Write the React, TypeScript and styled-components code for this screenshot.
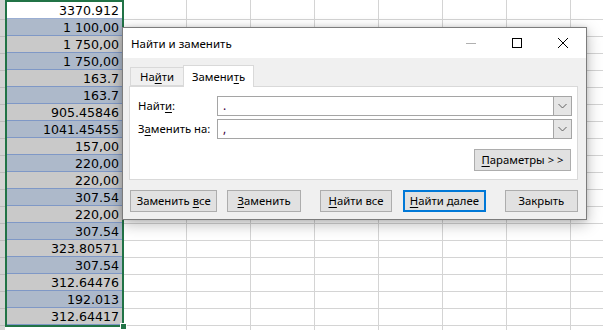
import React from "react"
import styled, { createGlobalStyle } from "styled-components"

const GlobalStyle = createGlobalStyle`
  html, body {
    margin: 0;
    padding: 0;
    width: 603px;
    height: 330px;
    overflow: hidden;
    background: #ffffff;
  }
`

const VALUES = [
  "3370.912",
  "1 100,00",
  "1 750,00",
  "1 750,00",
  "163.7",
  "163.7",
  "905.45846",
  "1041.45455",
  "157,00",
  "220,00",
  "220,00",
  "307.54",
  "220,00",
  "307.54",
  "323.80571",
  "307.54",
  "312.64476",
  "192.013",
  "312.64417",
]

const PLAIN_COLUMNS = [63, 64, 64, 64, 64, 64, 64, 64]
const ROW_COUNT = 20

const Screen = styled.div`
  position: relative;
  width: 603px;
  height: 330px;
  overflow: hidden;
  background: #ffffff;
`

const Sheet = styled.div`
  display: flex;
  align-items: flex-start;
  height: 330px;
`

const Column = styled.div<{ $w: number }>`
  display: flex;
  flex-direction: column;
  flex: 0 0 ${(p) => p.$w}px;
  width: ${(p) => p.$w}px;
`

const PlainCell = styled.div<{ $first?: boolean }>`
  height: ${(p) => (p.$first ? 19 : 16)}px;
  border-right: 1px solid #d4d4d4;
  border-bottom: 1px solid #d4d4d4;
`

const StubCell = styled.div<{ $first?: boolean }>`
  height: ${(p) => (p.$first ? 19 : 16)}px;
  background: #d4d4d4;
  border-bottom: 1px solid #bcbcbc;
`

const SelectedColumn = styled.div`
  position: relative;
  display: flex;
  flex-direction: column;
  flex: 0 0 119px;
  width: 119px;
  box-sizing: border-box;
  border: 2px solid #217346;
`

type Shade = "white" | "blue" | "grey"

const SHADES: Record<Shade, string> = {
  white: "#ffffff",
  blue: "#adb9ca",
  grey: "#c9c9c9",
}

const NumberCell = styled.div<{ $shade: Shade }>`
  height: 16px;
  line-height: 17px;
  padding-right: 3px;
  text-align: right;
  background: ${(p) => SHADES[p.$shade]};
  border-bottom: 1px solid ${(p) => (p.$shade === "white" ? "#9aaed3" : "#7f98c6")};
  font-family: "DejaVu Sans", sans-serif;
  font-size: 12.6px;
  color: #000000;
  white-space: nowrap;

  &:last-child {
    border-bottom: none;
  }
`

const FillHandle = styled.div`
  position: absolute;
  right: -5px;
  bottom: -5px;
  width: 5px;
  height: 5px;
  background: #217346;
  border: 1px solid #ffffff;
`

/* dialog */

const Window = styled.div`
  position: absolute;
  left: 122px;
  top: 27px;
  width: 465px;
  height: 193px;
  box-sizing: border-box;
  border: 1px solid #7c7c7c;
  background: #f0f0f0;
  box-shadow: 0 4px 14px rgba(0, 0, 0, 0.28), 0 0 4px rgba(0, 0, 0, 0.12);
  display: flex;
  flex-direction: column;
  font-family: "Noto Sans", "Liberation Sans", sans-serif;
  font-size: 11.3px;
  color: #000000;
`

const TitleBar = styled.div`
  display: flex;
  align-items: center;
  height: 30px;
  background: #ffffff;
  flex: 0 0 30px;
`

const Title = styled.div`
  flex: 1;
  padding-left: 8px;
  font-size: 11.5px;
  line-height: 16px;
  padding-top: 1px;
`

const WinButton = styled.div`
  width: 46px;
  height: 30px;
  display: flex;
  align-items: center;
  justify-content: center;
`

const Body = styled.div`
  flex: 1;
  display: flex;
  flex-direction: column;
  padding: 7px 8px 0 6px;
`

const TabStrip = styled.div`
  display: flex;
  align-items: flex-end;
  height: 21px;
  padding-left: 1px;
  position: relative;
  z-index: 1;
`

const Tab = styled.div<{ $active?: boolean }>`
  box-sizing: border-box;
  height: ${(p) => (p.$active ? 22 : 19)}px;
  margin-bottom: ${(p) => (p.$active ? -1 : 0)}px;
  padding: 0 ${(p) => (p.$active ? 8 : 9)}px;
  display: flex;
  align-items: center;
  background: ${(p) => (p.$active ? "#ffffff" : "#f0f0f0")};
  border: 1px solid #d9d9d9;
  border-bottom: ${(p) => (p.$active ? "none" : "1px solid #d9d9d9")};
  border-right: ${(p) => (p.$active ? "1px solid #d9d9d9" : "none")};
  line-height: 16px;
`

const Panel = styled.div`
  height: 94px;
  box-sizing: border-box;
  background: #ffffff;
  border: 1px solid #d9d9d9;
  display: grid;
  grid-template-columns: 79px 1fr;
  grid-auto-rows: min-content;
  row-gap: 3px;
  padding: 9px 5px 0 8px;
`

const Label = styled.div`
  display: flex;
  align-items: center;
  height: 20px;
  line-height: 16px;
  white-space: pre;
`

const Combo = styled.div`
  display: flex;
  height: 20px;
  box-sizing: border-box;
  border: 1px solid #a5a5a5;
  background: #ffffff;
`

const ComboText = styled.div`
  flex: 1;
  padding-left: 5px;
  line-height: 17px;
  font-size: 12px;
  color: #400040;
`

const ComboArrow = styled.div`
  width: 17px;
  display: flex;
  align-items: center;
  justify-content: center;
  background: #e5e5e5;
  border-left: 1px solid #a5a5a5;
`

const ParamsRow = styled.div`
  grid-column: 1 / 3;
  display: flex;
  justify-content: flex-end;
  padding-top: 7px;
  padding-right: 1px;
`

const Button = styled.div<{ $w: number; $ml?: number; $default?: boolean }>`
  box-sizing: border-box;
  width: ${(p) => p.$w}px;
  height: 22px;
  margin-left: ${(p) => p.$ml ?? 0}px;
  display: flex;
  align-items: center;
  justify-content: center;
  background: #e1e1e1;
  border: ${(p) => (p.$default ? "2px solid #0078d7" : "1px solid #adadad")};
  line-height: 16px;
  white-space: pre;
`

const ButtonText = styled.span`
  white-space: pre;
`

const ButtonRow = styled.div`
  display: flex;
  margin-top: 10px;
  padding-left: 1px;
`

const U = styled.span`
  text-decoration: underline;
  text-underline-offset: 2px;
`

function Chevron() {
  return (
    <svg width="9" height="6" viewBox="0 0 9 6">
      <polyline points="0.5,1 4.5,5 8.5,1" fill="none" stroke="#606060" strokeWidth="1" />
    </svg>
  )
}

function Spreadsheet() {
  const plainCells = Array.from({ length: ROW_COUNT }, (_, i) => i)
  return (
    <Sheet>
      <Column $w={5}>
        {plainCells.map((i) => (
          <StubCell key={i} $first={i === 0} />
        ))}
      </Column>
      <SelectedColumn>
        {VALUES.map((v, i) => (
          <NumberCell key={i} $shade={i === 0 ? "white" : i % 2 === 1 ? "blue" : "grey"}>
            {v}
          </NumberCell>
        ))}
        <FillHandle />
      </SelectedColumn>
      {PLAIN_COLUMNS.map((w, c) => (
        <Column key={c} $w={w}>
          {plainCells.map((i) => (
            <PlainCell key={i} $first={i === 0} />
          ))}
        </Column>
      ))}
    </Sheet>
  )
}

function FindReplaceDialog() {
  return (
    <Window>
      <TitleBar>
        <Title>Найти и заменить</Title>
        <WinButton>
          <svg width="10" height="10" viewBox="0 0 10 10">
            <line x1="0" y1="5.5" x2="10" y2="5.5" stroke="#b0b0b0" strokeWidth="1" />
          </svg>
        </WinButton>
        <WinButton>
          <svg width="10" height="10" viewBox="0 0 10 10">
            <rect x="0.5" y="0.5" width="9" height="9" fill="none" stroke="#000" strokeWidth="1" />
          </svg>
        </WinButton>
        <WinButton>
          <svg width="10" height="10" viewBox="0 0 10 10">
            <path d="M0 0 L10 10 M10 0 L0 10" stroke="#000" strokeWidth="1" />
          </svg>
        </WinButton>
      </TitleBar>
      <Body>
        <TabStrip>
          <Tab>
            <ButtonText>
              На<U>й</U>ти
            </ButtonText>
          </Tab>
          <Tab $active>
            <ButtonText>
              Замени<U>т</U>ь
            </ButtonText>
          </Tab>
        </TabStrip>
        <Panel>
          <Label>
            <ButtonText>
              Найт<U>и</U>:
            </ButtonText>
          </Label>
          <Combo>
            <ComboText>.</ComboText>
            <ComboArrow>
              <Chevron />
            </ComboArrow>
          </Combo>
          <Label>
            <ButtonText>
              З<U>а</U>менить на:
            </ButtonText>
          </Label>
          <Combo>
            <ComboText>,</ComboText>
            <ComboArrow>
              <Chevron />
            </ComboArrow>
          </Combo>
          <ParamsRow>
            <Button $w={97}>
              <ButtonText>
                <U>П</U>араметры &gt; &gt;
              </ButtonText>
            </Button>
          </ParamsRow>
        </Panel>
        <ButtonRow>
          <Button $w={88}>
            <ButtonText>
              Заменить <U>в</U>се
            </ButtonText>
          </Button>
          <Button $w={74} $ml={10}>
            <ButtonText>
              <U>З</U>аменить
            </ButtonText>
          </Button>
          <Button $w={73} $ml={19}>
            <ButtonText>
              <U>Н</U>айти все
            </ButtonText>
          </Button>
          <Button $w={83} $ml={11} $default>
            <ButtonText>
              <U>Н</U>айти далее
            </ButtonText>
          </Button>
          <Button $w={74} $ml={19}>
            <ButtonText>Закрыть</ButtonText>
          </Button>
        </ButtonRow>
      </Body>
    </Window>
  )
}

export default function App() {
  return (
    <Screen>
      <GlobalStyle />
      <Spreadsheet />
      <FindReplaceDialog />
    </Screen>
  )
}
